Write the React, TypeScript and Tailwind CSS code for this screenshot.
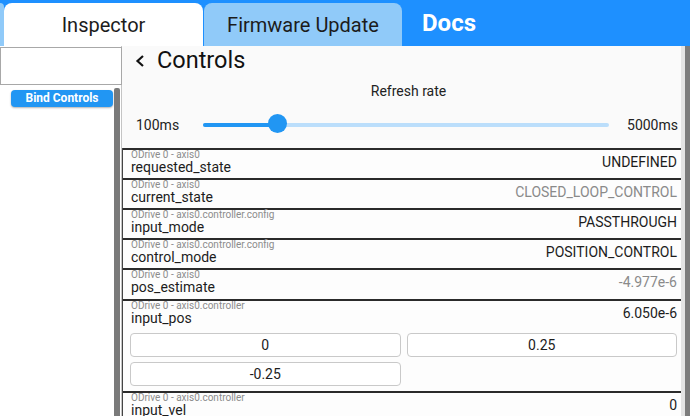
import React from 'react'

interface Prop {
  path: string
  name: string
  value: string
  muted?: boolean
  buttons?: string[]
  extra?: string
}

const props: Prop[] = [
  { path: 'ODrive 0 - axis0', name: 'requested_state', value: 'UNDEFINED' },
  { path: 'ODrive 0 - axis0', name: 'current_state', value: 'CLOSED_LOOP_CONTROL', muted: true },
  { path: 'ODrive 0 - axis0.controller.config', name: 'input_mode', value: 'PASSTHROUGH' },
  { path: 'ODrive 0 - axis0.controller.config', name: 'control_mode', value: 'POSITION_CONTROL' },
  { path: 'ODrive 0 - axis0', name: 'pos_estimate', value: '-4.977e-6', muted: true, extra: 'pb-[4px]' },
  { path: 'ODrive 0 - axis0.controller', name: 'input_pos', value: '6.050e-6', buttons: ['0', '0.25', '-0.25'] },
  { path: 'ODrive 0 - axis0.controller', name: 'input_vel', value: '0' },
]

function PropRow({ prop }: { prop: Prop }) {
  return (
    <div className="border-t-2 border-[#2b2b2b] bg-[#fdfdfd]">
      <div className={`flex items-center justify-between pl-[8px] pr-[4px] pb-[3px] ${prop.extra ?? ''}`}>
        <div>
          <div className="text-[10px] leading-[10px] text-[#8c8c8c]">{prop.path}</div>
          <div className="-mt-px text-[14px] leading-[16px] text-[#1c1c1c]">{prop.name}</div>
        </div>
        <div className={`text-[14px] ${prop.muted ? 'text-[#8a8a8a]' : 'text-[#1c1c1c]'}`}>{prop.value}</div>
      </div>
      {prop.buttons && (
        <div className="mt-[4px] grid grid-cols-2 gap-x-[6px] gap-y-[5px] pl-[7px] pr-[4px] pb-[5px]">
          {prop.buttons.map((b) => (
            <button
              key={b}
              type="button"
              className="h-[24px] rounded-[4px] border border-[#c9c9c9] bg-white text-[14px] text-[#1c1c1c]"
            >
              {b}
            </button>
          ))}
        </div>
      )}
    </div>
  )
}

export default function App() {
  return (
    <div className="flex h-[416px] w-[690px] flex-col overflow-hidden bg-white font-['Roboto',sans-serif]">
      {/* Tab bar */}
      <div className="flex h-[46px] shrink-0 items-end bg-[#1e90ff]">
        <div className="h-[43px] w-[4px] rounded-tr-[6px] bg-[#90caf9]" />
        <div className="flex h-[43px] w-[199px] items-center justify-center rounded-t-[8px] bg-white text-[20px] text-[#1c1c1c]">
          Inspector
        </div>
        <div className="ml-[1px] flex h-[43px] w-[198px] items-center justify-center rounded-t-[8px] bg-[#90caf9] text-[20px] text-[#1c1c1c]">
          Firmware Update
        </div>
        <div className="mb-[9px] ml-[20px] text-[24px] font-bold leading-[28px] text-white">Docs</div>
      </div>

      <div className="flex min-h-0 flex-1">
        {/* Left panel */}
        <div className="flex w-[122px] shrink-0 flex-col border-r border-[#c4c4c4] bg-white">
          <div className="mt-px h-[38px] w-[122px] border border-[#a8a8a8] bg-white" />
          <div className="flex flex-1">
            <div className="flex-1 pl-[11px] pt-[5px]">
              <button
                type="button"
                className="block h-[17px] w-[102px] rounded-[4px] bg-[#2196f3] text-[12px] font-bold leading-[17px] text-white shadow-[0_1px_2px_rgba(0,0,0,0.3)]"
              >
                Bind Controls
              </button>
            </div>
            <div className="mr-px mt-[3px] w-[6px] rounded-t-[2px] bg-[#7a7a7a]" />
          </div>
        </div>

        {/* Right panel */}
        <div className="flex min-w-0 flex-1 bg-[#fafafa]">
          <div className="min-w-0 flex-1">
            <div className="mt-px flex h-[27px] items-center pl-[13px]">
              <svg width="10" height="12" viewBox="0 0 10 12" className="shrink-0">
                <polyline points="8,1 2.5,6 8,11" fill="none" stroke="#111" strokeWidth="2.2" />
              </svg>
              <span className="ml-[12px] text-[23.5px] leading-[27px] text-[#111]">Controls</span>
            </div>
            <div className="mt-[9px] pl-[14px] text-center text-[14px] leading-[16px] text-[#222]">Refresh rate</div>
            <div className="mt-[16px] flex h-[20px] items-center">
              <span className="w-[81px] pl-[14px] text-[14px] text-[#222]">100ms</span>
              <div className="relative h-[20px] w-[406px]">
                <div className="absolute left-0 right-0 top-[8px] h-[4px] rounded-full bg-[#bbdefb]" />
                <div className="absolute left-0 top-[8px] h-[4px] w-[74px] rounded-full bg-[#2196f3]" />
                <div className="absolute left-[65px] top-[-1px] h-[19px] w-[19px] rounded-full bg-[#2196f3]" />
              </div>
              <span className="flex-1 pr-[3px] text-right text-[14px] text-[#222]">5000ms</span>
            </div>
            <div className="mt-[13px] border-l border-[#444]">
              {props.map((p) => (
                <PropRow key={p.name} prop={p} />
              ))}
            </div>
          </div>
          <div className="flex w-[9px] shrink-0">
            <div className="w-[4px] bg-[#e4e4e4]" />
            <div className="w-[5px] bg-[#7c7c7c]" />
          </div>
        </div>
      </div>
    </div>
  )
}
